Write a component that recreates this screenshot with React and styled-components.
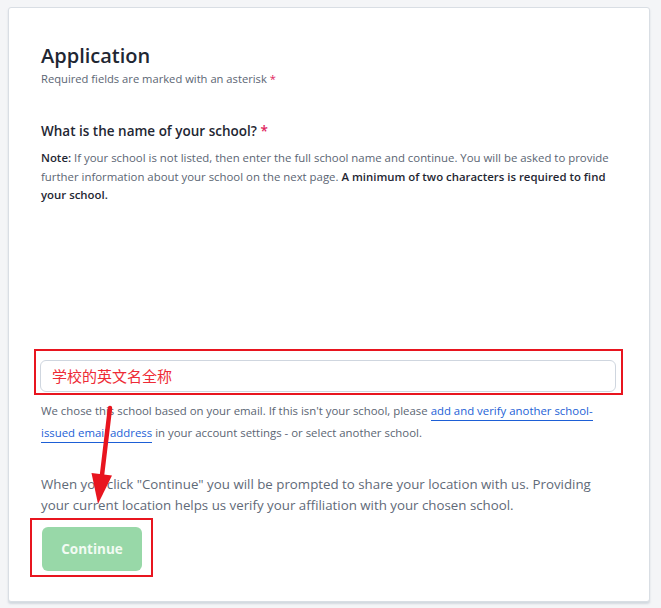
import React from 'react';
import styled, { createGlobalStyle } from 'styled-components';

const GlobalStyle = createGlobalStyle`
  html, body {
    margin: 0;
    background: #f4f5f7;
  }
  body {
    padding: 7px 11px 6px 8px;
    font-family: "Open Sans", "Noto Sans", sans-serif;
    color: #5b6573;
  }
`;

const Card = styled.div`
  position: relative;
  box-sizing: border-box;
  height: 595px;
  background: #fff;
  border: 1px solid #d9dee4;
  border-radius: 3px;
  box-shadow: 0 2px 2px rgba(150, 165, 180, 0.35);
  padding: 33px 32px 0 32px;
`;

const Title = styled.h1`
  margin: 0;
  font-size: 20px;
  line-height: 30px;
  font-weight: 600;
  color: #1f2733;
`;

const Subtitle = styled.p`
  margin: 0;
  font-size: 11.2px;
  line-height: 16px;
`;

const Required = styled.span`
  color: #e0245e;
`;

const Question = styled.h2`
  margin: 34px 0 0;
  font-size: 13.5px;
  line-height: 20px;
  font-weight: 600;
  color: #1f2733;
`;

const Note = styled.p`
  margin: 8px 0 0;
  font-size: 11.4px;
  line-height: 18.5px;
`;

const Strong = styled.strong`
  font-weight: 600;
  color: #1f2733;
`;

const Highlight = styled.div`
  box-sizing: border-box;
  border: 2px solid #e8151f;
  margin: ${p => p.$margin};
  padding: ${p => p.$padding};
  width: ${p => p.$width};
`;

const InputBox = styled.div`
  box-sizing: border-box;
  height: 32px;
  border: 1px solid #cfd6df;
  border-radius: 6px;
  padding: 0 11px;
  display: flex;
  align-items: center;
  font-family: "Noto Sans CJK SC", sans-serif;
  font-size: 15px;
  color: #ee2b36;
`;

const Hint = styled.p`
  margin: 5px 0 0;
  font-size: 11.4px;
  line-height: 22px;
`;

const Link = styled.a`
  color: #1d5fd6;
  text-decoration: none;
  border-bottom: 1px solid #1d5fd6;
  padding-bottom: 2px;
`;

const Info = styled.p`
  margin: 30px 0 0;
  font-size: 13.3px;
  line-height: 21px;
  color: #5f6a78;
`;

const Button = styled.button`
  width: 100px;
  height: 44px;
  border: none;
  border-radius: 6px;
  background: #98d8a8;
  color: #f2fbf3;
  font-family: "Open Sans", sans-serif;
  font-size: 13.5px;
  font-weight: 700;
`;

const Arrow = styled.svg`
  position: absolute;
  left: 77px;
  top: 395px;
`;

export default function App() {
  return (
    <>
      <GlobalStyle />
      <Card>
        <Title>Application</Title>
        <Subtitle>
          Required fields are marked with an asterisk <Required>*</Required>
        </Subtitle>
        <Question>
          What is the name of your school? <Required>*</Required>
        </Question>
        <Note>
          <Strong>Note:</Strong> If your school is not listed, then enter the full school name and
          continue. You will be asked to provide further information about your school on the next
          page. <Strong>A minimum of two characters is required to find your school.</Strong>
        </Note>
        <Highlight $margin="144px -6px 0 -7px" $padding="9px 5px 1px 4px">
          <InputBox>学校的英文名全称</InputBox>
        </Highlight>
        <Hint>
          We chose this school based on your email. If this isn't your school, please{' '}
          <Link>add and verify another school-issued email address</Link> in your account settings
          - or select another school.
        </Hint>
        <Info>
          When you click "Continue" you will be prompted to share your location with us. Providing
          your current location helps us verify your affiliation with your chosen school.
        </Info>
        <Highlight $margin="2px 0 0 -11px" $padding="7px 9px 4px 10px" $width="123px">
          <Button>Continue</Button>
        </Highlight>
        <Arrow width="30" height="104" viewBox="0 0 30 104">
          <line x1="24" y1="5" x2="16" y2="72" stroke="#e8151f" strokeWidth="4.5" strokeLinecap="round" />
          <polygon points="26,72.5 5.5,70 12,101" fill="#e8151f" />
        </Arrow>
      </Card>
    </>
  );
}
